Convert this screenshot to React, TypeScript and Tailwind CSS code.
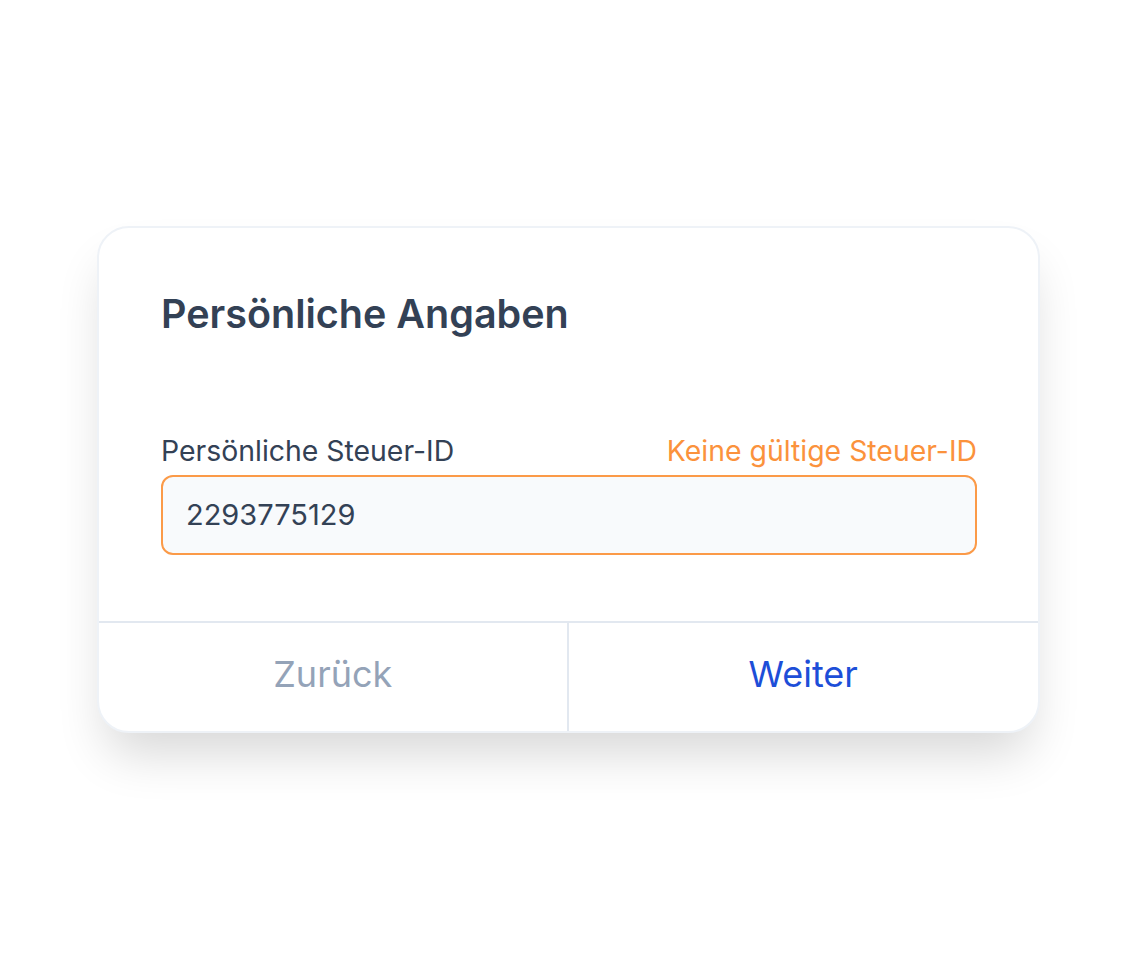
import React from "react";

export default function App() {
  return (
    <div className="min-h-[960px] w-full bg-white pt-[226px]" style={{ fontFamily: "Inter, 'Noto Sans', sans-serif" }}>
      <div className="ml-[97px] w-[943px] overflow-hidden rounded-[32px] border-2 border-[#eef2f7] bg-white shadow-[0_30px_50px_-10px_rgba(0,0,0,0.16)]">
        <div className="pl-[62px] pr-[61px] pt-[62px] pb-[66px]">
          <h1 className="text-[39.5px] font-semibold leading-[48px] text-[#334155]">Persönliche Angaben</h1>
          <div className="mt-[97px] flex items-end justify-between">
            <span className="text-[28.4px] leading-[32px] text-[#334155]">Persönliche Steuer-ID</span>
            <span className="text-[28.4px] leading-[32px] text-[#fb923c]">Keine gültige Steuer-ID</span>
          </div>
          <div className="mt-[8px] flex h-[80px] items-center rounded-[12px] border-2 border-[#fb9a48] bg-[#f8fafc] px-[23px] text-[29px] text-[#334155]">
            2293775129
          </div>
        </div>
        <div className="grid grid-cols-2 border-t-2 border-[#e2e8f0]">
          <button className="h-[108px] border-r-2 border-[#e2e8f0] pb-[6px] text-[36px] text-[#94a3b8]">Zurück</button>
          <button className="h-[108px] pb-[6px] text-[36px] text-[#1d4ed8]">Weiter</button>
        </div>
      </div>
    </div>
  );
}
